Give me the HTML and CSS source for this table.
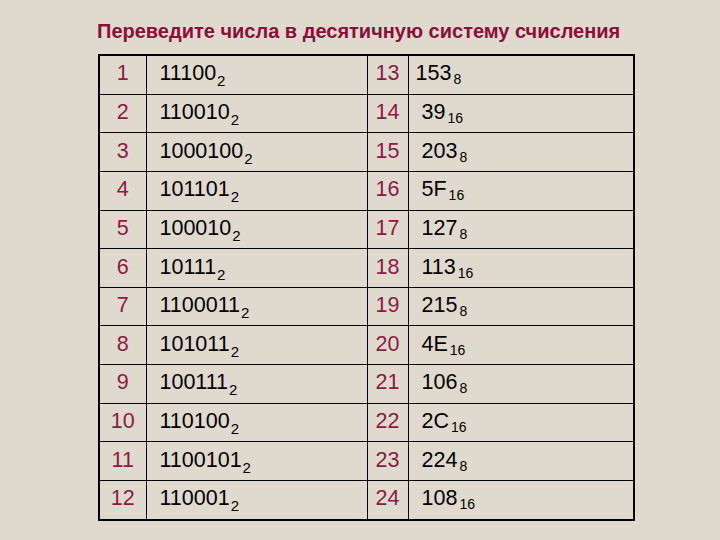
FILE: index.html
```html
<!DOCTYPE html>
<html lang="ru">
<head>
<meta charset="utf-8">
<title>Перевод чисел</title>
<link rel="stylesheet" href="styles.css">
</head>
<body>
<div class="slide">
  <h1 class="title">Переведите числа в десятичную систему счисления</h1>
  <table class="grid">
    <colgroup>
      <col class="c-num"><col class="c-bin"><col class="c-num2"><col class="c-val">
    </colgroup>
    <tbody>
      <tr><td class="num">1</td><td class="bin">11100<sub>2</sub></td><td class="num">13</td><td class="val first">153<sub>8</sub></td></tr>
      <tr><td class="num">2</td><td class="bin">110010<sub>2</sub></td><td class="num">14</td><td class="val">39<sub>16</sub></td></tr>
      <tr><td class="num">3</td><td class="bin">1000100<sub>2</sub></td><td class="num">15</td><td class="val">203<sub>8</sub></td></tr>
      <tr><td class="num">4</td><td class="bin">101101<sub>2</sub></td><td class="num">16</td><td class="val">5F<sub>16</sub></td></tr>
      <tr><td class="num">5</td><td class="bin">100010<sub>2</sub></td><td class="num">17</td><td class="val">127<sub>8</sub></td></tr>
      <tr><td class="num">6</td><td class="bin">10111<sub>2</sub></td><td class="num">18</td><td class="val">113<sub>16</sub></td></tr>
      <tr><td class="num">7</td><td class="bin">1100011<sub>2</sub></td><td class="num">19</td><td class="val">215<sub>8</sub></td></tr>
      <tr><td class="num">8</td><td class="bin">101011<sub>2</sub></td><td class="num">20</td><td class="val">4E<sub>16</sub></td></tr>
      <tr><td class="num">9</td><td class="bin">100111<sub>2</sub></td><td class="num">21</td><td class="val">106<sub>8</sub></td></tr>
      <tr><td class="num">10</td><td class="bin">110100<sub>2</sub></td><td class="num">22</td><td class="val">2C<sub>16</sub></td></tr>
      <tr><td class="num">11</td><td class="bin">1100101<sub>2</sub></td><td class="num">23</td><td class="val">224<sub>8</sub></td></tr>
      <tr><td class="num">12</td><td class="bin">110001<sub>2</sub></td><td class="num">24</td><td class="val">108<sub>16</sub></td></tr>
    </tbody>
  </table>
</div>
</body>
</html>
```
FILE: styles.css
```css
html, body {
  margin: 0;
  padding: 0;
  background: #dfd9ce;
}
.slide {
  width: 720px;
  height: 540px;
  box-sizing: border-box;
  padding-top: 19px;
  font-family: "Liberation Sans", Arial, sans-serif;
}
.title {
  margin: 0 0 11px 97px;
  font-size: 20px;
  line-height: 24px;
  font-weight: bold;
  color: #8a0f3b;
  white-space: nowrap;
}
.grid {
  margin-left: 98px;
  border-collapse: collapse;
  table-layout: fixed;
  width: 535px;
  border: 2px solid #000;
}
.c-num { width: 47px; }
.c-bin { width: 221px; }
.c-num2 { width: 41px; }
.c-val { width: 226px; }
.grid td {
  border: 1px solid #000;
  height: 34.65px;
  padding: 0 0 3px 0;
  font-size: 21.5px;
  line-height: 24px;
  vertical-align: middle;
  color: #000;
  white-space: nowrap;
}
.grid td.num {
  text-align: center;
  color: #8c1a42;
}
.grid td.bin {
  padding-left: 13px;
}
.grid td.val {
  padding-left: 13px;
}
.grid td.val.first {
  padding-left: 7px;
}
.bin sub {
  font-size: 15px;
  vertical-align: -6px;
  line-height: 0;
  margin-left: 1px;
}
.val sub {
  font-size: 14px;
  vertical-align: -4px;
  line-height: 0;
  margin-left: 2px;
}
```
